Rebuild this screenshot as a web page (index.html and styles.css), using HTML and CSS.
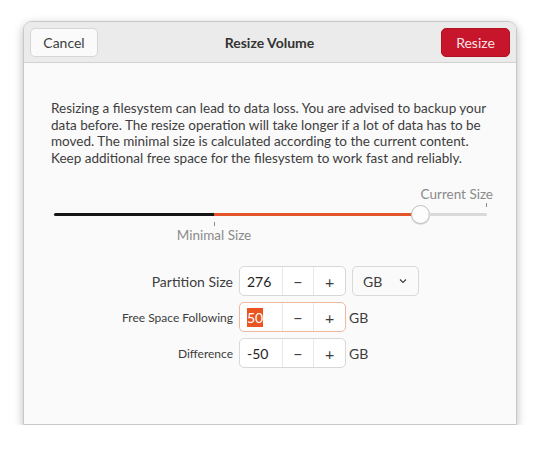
FILE: index.html
```html
<!DOCTYPE html>
<html>
<head>
<meta charset="utf-8">
<link rel="stylesheet" href="styles.css">
</head>
<body>
<div class="window">
  <header class="headerbar">
    <button class="btn">Cancel</button>
    <div class="title">Resize Volume</div>
    <button class="btn btn-destructive">Resize</button>
  </header>
  <main class="content">
    <p class="warning">Resizing a filesystem can lead to data loss. You are advised to backup your data before. The resize operation will take longer if a lot of data has to be moved. The minimal size is calculated according to the current content. Keep additional free space for the filesystem to work fast and reliably.</p>
    <div class="slider">
      <div class="slider-top"><span class="mark-label">Current Size</span></div>
      <div class="slider-top-ticks"><span class="tick"></span></div>
      <div class="track">
        <div class="seg seg-black"></div>
        <div class="seg seg-orange"></div>
        <div class="thumb"></div>
        <div class="seg seg-gray"></div>
      </div>
      <div class="slider-bottom">
        <div class="min-mark"><span class="tick"></span><span class="mark-label">Minimal Size</span></div>
      </div>
    </div>
    <div class="form">
      <label class="lbl lbl-big">Partition Size</label>
      <div class="spin">
        <span class="spin-entry">276</span>
        <span class="spin-btn">&minus;</span>
        <span class="spin-btn">+</span>
      </div>
      <div class="dropdown"><span>GB</span>
        <svg width="12" height="12" viewBox="0 0 12 12"><path d="M3 4.5 L6 7.5 L9 4.5" fill="none" stroke="#3d3d3d" stroke-width="1.1"/></svg>
      </div>

      <label class="lbl">Free Space Following</label>
      <div class="spin spin-focus">
        <span class="spin-entry"><span class="sel">50</span></span>
        <span class="spin-btn">&minus;</span>
        <span class="spin-btn">+</span>
      </div>
      <span class="unit">GB</span>

      <label class="lbl">Difference</label>
      <div class="spin">
        <span class="spin-entry">-50</span>
        <span class="spin-btn">&minus;</span>
        <span class="spin-btn">+</span>
      </div>
      <span class="unit">GB</span>
    </div>
  </main>
</div>
</body>
</html>
```
FILE: styles.css
```css
* { box-sizing: border-box; }
html, body { margin: 0; padding: 0; background: #ffffff; }
body {
  font-family: "Lato", "Noto Sans", sans-serif;
  color: #3d3d3d;
  font-size: 13px;
  padding: 21px 0 0 23px;
}
.window {
  width: 494px;
  height: 404px;
  background: #fafafa;
  border: 1px solid #c8c8c8;
  border-radius: 9px 9px 0 0;
  box-shadow: 0 3px 10px rgba(0,0,0,0.28);
  display: flex;
  flex-direction: column;
  overflow: hidden;
}
.headerbar {
  height: 41px;
  flex: none;
  background: #ebebeb;
  border-bottom: 1px solid #d2d2d2;
  display: flex;
  align-items: center;
  justify-content: space-between;
  padding: 0 6px;
}
.btn {
  font-family: inherit;
  font-size: 14px;
  color: #3d3d3d;
  height: 29px;
  width: 68px;
  border: 1px solid #d6d6d6;
  border-radius: 5px;
  background: #fafafa;
  padding: 0;
}
.btn-destructive {
  width: 69px;
  background: #c7162b;
  border-color: #b0131f;
  color: #fbe3e5;
}
.title {
  font-weight: bold;
  font-size: 14px;
  color: #333;
}
.content {
  flex: 1;
  padding: 37px 20px 0 27px;
}
.warning {
  margin: 0;
  line-height: 16.6px;
  font-size: 13.5px;
  color: #3d3d3d;
  width: 442px;
}
.slider {
  margin: 20px 0 0 3px;
  width: 436px;
}
.slider-top {
  display: flex;
  justify-content: flex-end;
  height: 16px;
  margin-right: -3px;
}
.mark-label {
  font-size: 13.5px;
  color: #8a8a8a;
  line-height: 16px;
}
.slider-top-ticks {
  display: flex;
  justify-content: flex-end;
  height: 2px;
  padding-right: 3px;
}
.tick {
  display: block;
  width: 1px;
  height: 4px;
  flex: none;
  background: #8a8a8a;
}
.slider-top-ticks .tick { margin-top: 1px; }
.track {
  display: flex;
  align-items: center;
  height: 20px;
}
.seg { height: 3px; border-radius: 2px; }
.seg-black { width: 160px; background: #151515; border-radius: 2px 0 0 2px; }
.seg-orange { width: 206px; background: #e4562a; border-radius: 0; }
.seg-gray { flex: 1; background: #d9d9d9; margin-right: 3px; }
.thumb {
  width: 19px;
  height: 19px;
  border-radius: 50%;
  background: #fdfdfd;
  border: 1px solid #c0c0c0;
  box-shadow: 0 1px 1px rgba(0,0,0,0.12);
  flex: none;
  margin: 0 -2px 0 -9px;
}
.slider-bottom {
  height: 24px;
}
.min-mark {
  display: flex;
  flex-direction: column;
  align-items: center;
  width: 90px;
  margin-left: 115px;
}
.min-mark .tick { margin-top: -2px; height: 4px; }
.min-mark .mark-label { margin-top: 1px; }

.form {
  margin-top: 18px;
  display: grid;
  grid-template-columns: 182px auto auto;
  justify-content: start;
  column-gap: 6px;
  row-gap: 6px;
  align-items: center;
  justify-items: start;
}
.lbl {
  justify-self: end;
  font-size: 12px;
  color: #3d3d3d;
}
.lbl-big { font-size: 14px; }
.spin {
  display: flex;
  height: 30px;
  width: 107px;
  border: 1px solid #d8d8d8;
  border-radius: 5px;
  background: #ffffff;
}
.spin-focus { border-color: #f0b79f; }
.spin-entry {
  width: 42px;
  display: flex;
  align-items: center;
  padding-left: 7px;
  font-size: 14px;
  color: #222;
}
.sel {
  background: #e95420;
  color: #fff;
  padding: 1px 0;
}
.spin-btn {
  width: 32px;
  display: flex;
  align-items: center;
  justify-content: center;
  border-left: 1px solid #e8e8e8;
  font-size: 16px;
  color: #3d3d3d;
}
.dropdown {
  height: 30px;
  width: 67px;
  border: 1px solid #d8d8d8;
  border-radius: 5px;
  background: #fafafa;
  display: flex;
  align-items: center;
  justify-content: space-between;
  padding: 0 9px 0 10px;
  font-size: 14px;
}
.unit {
  font-size: 14px;
  margin-left: -3px;
}
```
